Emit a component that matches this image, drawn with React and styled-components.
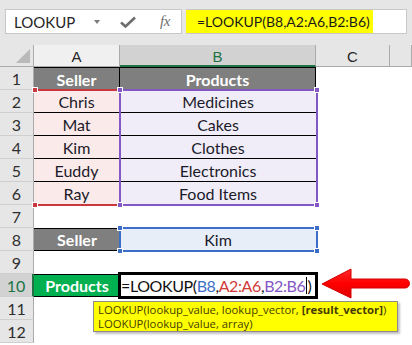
import React from "react";
import styled, { createGlobalStyle, css } from "styled-components";

const Global = createGlobalStyle`
  html, body { margin: 0; padding: 0; background: #ffffff; }
  * { box-sizing: border-box; }
`;

const Frame = styled.div`
  position: relative;
  width: 412px;
  height: 345px;
  overflow: hidden;
  background: #ffffff;
  font-family: Lato, "Liberation Sans", sans-serif;
`;

const TopBar = styled.div`
  height: 45px;
  background: #e6e6e6;
  display: flex;
  align-items: flex-start;
  padding: 9px 0 0 5px;
  gap: 4px;
`;

const NameBox = styled.div`
  width: 177px;
  height: 25px;
  background: #ffffff;
  border: 1px solid #c8c8c8;
  display: flex;
  align-items: center;
`;

const NameText = styled.span`
  width: 86px;
  padding-left: 8px;
  font-size: 15px;
  color: #262626;
`;

const Caret = styled.span`
  width: 0;
  height: 0;
  border-left: 3.5px solid transparent;
  border-right: 3.5px solid transparent;
  border-top: 4px solid #7a7a7a;
  margin-left: 2px;
`;

const IconSlot = styled.span`
  display: flex;
  align-items: center;
  justify-content: center;
  width: ${(p) => p.$w}px;
  margin-left: ${(p) => p.$ml}px;
  color: #7a7a7a;
`;

const Fx = styled.span`
  font-family: "Liberation Serif", serif;
  font-style: italic;
  font-size: 15px;
  color: #6f6f6f;
  letter-spacing: -0.5px;
`;

const FormulaBox = styled.div`
  flex: 0 0 221px;
  height: 25px;
  background: #ffffff;
  border: 1px solid #c8c8c8;
  border-left: none;
  display: flex;
`;

const FormulaHighlight = styled.span`
  display: flex;
  align-items: center;
  background: #ffff00;
  width: 187px;
  height: 100%;
  padding-left: 11px;
  font-size: 14px;
  color: #1a1a1a;
  white-space: nowrap;
`;

const Sheet = styled.div`
  display: grid;
  grid-template-columns: 34px 86px 196px 74px 1fr;
  grid-template-rows: 22px repeat(12, 23px);
  background: #ffffff;
`;

const Corner = styled.div`
  background: #e6e6e6;
  border-right: 1px solid #ababab;
  border-bottom: 1px solid #ababab;
  position: relative;
  &::after {
    content: "";
    position: absolute;
    right: 3px;
    bottom: 3px;
    width: 0;
    height: 0;
    border-left: 14px solid transparent;
    border-bottom: 14px solid #b9b9b9;
  }
`;

const ColHeader = styled.div`
  display: flex;
  align-items: center;
  justify-content: center;
  font-family: "Liberation Sans", Arial, sans-serif;
  font-size: 15px;
  color: ${(p) => (p.$active ? "#217346" : "#262626")};
  background: ${(p) => (p.$active ? "#d2d2d2" : p.$light ? "#f0f0f0" : "#e6e6e6")};
  border-right: 1px solid #ababab;
  border-bottom: ${(p) => (p.$active ? "2px solid #217346" : "1px solid #ababab")};
  padding-top: 2px;
`;

const RowHeader = styled.div`
  display: flex;
  align-items: center;
  justify-content: center;
  font-size: 16px;
  color: ${(p) => (p.$active ? "#217346" : "#2e2e2e")};
  background: ${(p) => (p.$active ? "#d2d2d2" : "#e6e6e6")};
  border-bottom: 1px solid #cfcfcf;
  border-right: ${(p) => (p.$active ? "2px solid #217346" : "1px solid #ababab")};
`;

const variants = {
  head: css`
    background: #7f7f7f;
    color: #ffffff;
    font-weight: 700;
    border-top: 1px solid #000;
    border-right: 1px solid #000;
  `,
  green: css`
    background: #00b050;
    color: #ffffff;
    font-weight: 700;
    border-top: 1px solid #000;
    border-bottom: 1px solid #000;
  `,
  sell: css`
    background: #7f7f7f;
    color: #ffffff;
    font-weight: 700;
    border-top: 1px solid #000;
    border-bottom: 1px solid #000;
  `,
  pink: css`
    background: #fbeaea;
    color: #1b1b2a;
    border-bottom: 1px solid #000;
    border-right: 1px solid #ffffff;
  `,
  lav: css`
    background: #f0edf8;
    color: #1b1b2a;
    border-bottom: 1px solid #000;
  `,
  blue: css`
    background: #e8eef8;
    color: #1b1b2a;
  `,
  blank: css`
    background: #ffffff;
  `,
};

const Cell = styled.div`
  display: flex;
  align-items: center;
  justify-content: center;
  font-size: 16px;
  white-space: nowrap;
  ${(p) => variants[p.$v || "blank"]}
`;

const EditCell = styled.div`
  display: flex;
  align-items: center;
  padding-left: 1px;
  font-size: 16px;
  letter-spacing: -0.4px;
  color: #111;
  white-space: nowrap;
  background: #ffffff;
  outline: 3px solid #000;
  outline-offset: -1px;
  position: relative;
  z-index: 2;
`;

const Ref = styled.span`
  color: ${(p) => p.$c};
`;

const Caretline = styled.span`
  display: inline-block;
  width: 1px;
  height: 17px;
  margin: 0 0.5px;
  background: #000;
`;

const Range = styled.div`
  position: absolute;
  left: ${(p) => p.$x}px;
  top: ${(p) => p.$y}px;
  width: ${(p) => p.$w}px;
  height: ${(p) => p.$h}px;
  border: 2px solid ${(p) => p.$c};
  ${(p) => p.$noSides && css`border-left-color: transparent; border-right-color: transparent;`}
  pointer-events: none;
  z-index: 1;
`;

const Handle = styled.span`
  position: absolute;
  width: 6px;
  height: 6px;
  background: ${(p) => p.$c};
  border: 1px solid #ffffff;
  ${(p) => (p.$t ? "top: -4px;" : "bottom: -4px;")}
  ${(p) => (p.$l ? "left: -4px;" : "right: -4px;")}
`;

const Tooltip = styled.div`
  position: absolute;
  left: 93px;
  top: 301px;
  width: 305px;
  height: 31px;
  background: #ffff00;
  border: 1px solid #8c8c8c;
  box-shadow: 2px 2px 2px rgba(0, 0, 0, 0.25);
  padding: 1px 0 0 4px;
  font-family: "Open Sans", "Liberation Sans", sans-serif;
  font-size: 11.3px;
  line-height: 14px;
  color: #463c00;
  z-index: 3;
  white-space: nowrap;
`;

const TipLine = styled.div`
  height: 14px;
`;

const Arrow = styled.svg`
  position: absolute;
  left: 318px;
  top: 264px;
  z-index: 3;
`;

const rowsData = [
  ["Seller", "head", "Products", "head"],
  ["Chris", "pink", "Medicines", "lav"],
  ["Mat", "pink", "Cakes", "lav"],
  ["Kim", "pink", "Clothes", "lav"],
  ["Euddy", "pink", "Electronics", "lav"],
  ["Ray", "pink", "Food Items", "lav"],
  null,
  ["Seller", "sell", "Kim", "blue"],
  null,
  "edit",
  null,
  null,
];

const RANGE_PURPLE = "#8358c4";
const RANGE_RED = "#c8383c";
const RANGE_BLUE = "#3c6ec8";

function Handles({ c, sides = "all" }) {
  return (
    <>
      <Handle $c={c} $t $l />
      <Handle $c={c} $l />
      {sides === "all" && <Handle $c={c} $t />}
      {sides === "all" && <Handle $c={c} />}
    </>
  );
}

export default function App() {
  return (
    <Frame>
      <Global />
      <TopBar>
        <NameBox>
          <NameText>LOOKUP</NameText>
          <Caret />
          <IconSlot $w={16} $ml={20}>
            <svg width="16" height="12" viewBox="0 0 16 12">
              <path d="M1 6.5 L5.5 10.5 L15 1.5" fill="none" stroke="#6d6d6d" strokeWidth="2.6" strokeLinejoin="miter" />
            </svg>
          </IconSlot>
          <IconSlot $w={16} $ml={21}>
            <Fx>fx</Fx>
          </IconSlot>
        </NameBox>
        <FormulaBox>
          <FormulaHighlight>=LOOKUP(B8,A2:A6,B2:B6)</FormulaHighlight>
        </FormulaBox>
      </TopBar>

      <div style={{ position: "relative" }}>
        <Sheet>
          <Corner />
          <ColHeader $light>A</ColHeader>
          <ColHeader $active>B</ColHeader>
          <ColHeader>C</ColHeader>
          <ColHeader />
          {rowsData.map((r, i) => {
            const n = i + 1;
            return (
              <React.Fragment key={n}>
                <RowHeader $active={n === 10}>{n}</RowHeader>
                {r === "edit" ? (
                  <>
                    <Cell $v="green">Products</Cell>
                    <EditCell>
                      =LOOKUP(<Ref $c="#3c6ec8">B8</Ref>,<Ref $c="#d23a3a">A2:A6</Ref>,<Ref $c="#8358c4">B2:B6</Ref>
                      <Caretline />)
                    </EditCell>
                  </>
                ) : r ? (
                  <>
                    <Cell $v={r[1]}>{r[0]}</Cell>
                    <Cell $v={r[3]}>{r[2]}</Cell>
                  </>
                ) : (
                  <>
                    <Cell />
                    <Cell />
                  </>
                )}
                <Cell />
                <Cell />
              </React.Fragment>
            );
          })}
        </Sheet>
        <Range $x={34} $y={44} $w={87} $h={117} $c={RANGE_RED} $noSides>
          <Handles c={RANGE_RED} sides="left" />
        </Range>
        <Range $x={119} $y={44} $w={199} $h={117} $c={RANGE_PURPLE}>
          <Handles c={RANGE_PURPLE} />
        </Range>
        <Range $x={119} $y={182} $w={199} $h={25} $c={RANGE_BLUE}>
          <Handles c={RANGE_BLUE} />
        </Range>
      </div>

      <Tooltip>
        <TipLine>
          LOOKUP(lookup_value, lookup_vector, <b>[result_vector]</b>)
        </TipLine>
        <TipLine>LOOKUP(lookup_value, array)</TipLine>
      </Tooltip>

      <Arrow width="94" height="38" viewBox="0 0 94 38">
        <defs>
          <linearGradient id="ag" x1="0" y1="0" x2="0" y2="1">
            <stop offset="0" stopColor="#ff2a2a" />
            <stop offset="0.5" stopColor="#ff0000" />
            <stop offset="1" stopColor="#e00000" />
          </linearGradient>
        </defs>
        <path
          d="M4 20 L33 5 L33 15 L87 15 A4.5 4.5 0 0 1 87 24 L33 24 L33 34 Z"
          fill="url(#ag)"
          stroke="#d40000"
          strokeWidth="1"
          strokeLinejoin="round"
        />
      </Arrow>
    </Frame>
  );
}
